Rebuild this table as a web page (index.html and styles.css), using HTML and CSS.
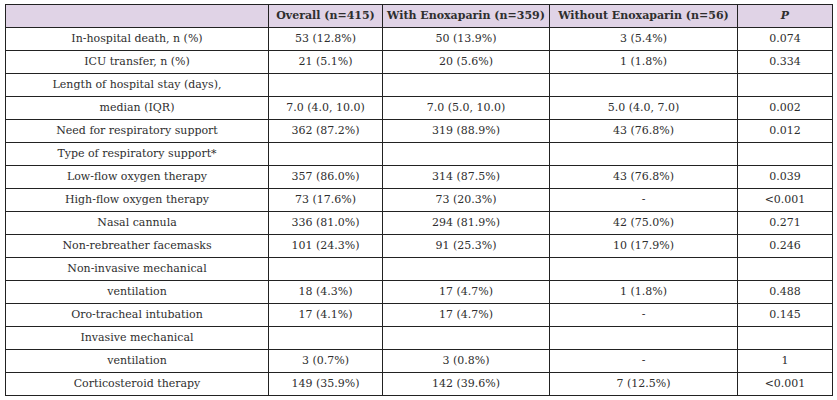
FILE: index.html
```html
<!DOCTYPE html>
<html lang="en">
<head>
<meta charset="utf-8">
<title>Outcomes</title>
<link rel="stylesheet" href="styles.css">
</head>
<body>
<table class="outcomes">
  <colgroup>
    <col class="c-label"><col class="c-overall"><col class="c-with"><col class="c-without"><col class="c-p">
  </colgroup>
  <thead>
    <tr><th></th><th>Overall (n=415)</th><th>With Enoxaparin (n=359)</th><th>Without Enoxaparin (n=56)</th><th><i>P</i></th></tr>
  </thead>
  <tbody>
    <tr><td>In-hospital death, n (%)</td><td>53 (12.8%)</td><td>50 (13.9%)</td><td>3 (5.4%)</td><td>0.074</td></tr>
    <tr><td>ICU transfer, n (%)</td><td>21 (5.1%)</td><td>20 (5.6%)</td><td>1 (1.8%)</td><td>0.334</td></tr>
    <tr><td>Length of hospital stay (days),</td><td></td><td></td><td></td><td></td></tr>
    <tr><td>median (IQR)</td><td>7.0 (4.0, 10.0)</td><td>7.0 (5.0, 10.0)</td><td>5.0 (4.0, 7.0)</td><td>0.002</td></tr>
    <tr><td>Need for respiratory support</td><td>362 (87.2%)</td><td>319 (88.9%)</td><td>43 (76.8%)</td><td>0.012</td></tr>
    <tr><td>Type of respiratory support*</td><td></td><td></td><td></td><td></td></tr>
    <tr><td>Low-flow oxygen therapy</td><td>357 (86.0%)</td><td>314 (87.5%)</td><td>43 (76.8%)</td><td>0.039</td></tr>
    <tr><td>High-flow oxygen therapy</td><td>73 (17.6%)</td><td>73 (20.3%)</td><td>-</td><td>&lt;0.001</td></tr>
    <tr><td>Nasal cannula</td><td>336 (81.0%)</td><td>294 (81.9%)</td><td>42 (75.0%)</td><td>0.271</td></tr>
    <tr><td>Non-rebreather facemasks</td><td>101 (24.3%)</td><td>91 (25.3%)</td><td>10 (17.9%)</td><td>0.246</td></tr>
    <tr><td>Non-invasive mechanical</td><td></td><td></td><td></td><td></td></tr>
    <tr><td>ventilation</td><td>18 (4.3%)</td><td>17 (4.7%)</td><td>1 (1.8%)</td><td>0.488</td></tr>
    <tr><td>Oro-tracheal intubation</td><td>17 (4.1%)</td><td>17 (4.7%)</td><td>-</td><td>0.145</td></tr>
    <tr><td>Invasive mechanical</td><td></td><td></td><td></td><td></td></tr>
    <tr><td>ventilation</td><td>3 (0.7%)</td><td>3 (0.8%)</td><td>-</td><td>1</td></tr>
    <tr><td>Corticosteroid therapy</td><td>149 (35.9%)</td><td>142 (39.6%)</td><td>7 (12.5%)</td><td>&lt;0.001</td></tr>
  </tbody>
</table>
</body>
</html>
```
FILE: styles.css
```css
html, body {
  margin: 0;
  padding: 0;
  background: #ffffff;
}
body {
  padding: 4px 0 0 5px;
  font-family: "DejaVu Serif", "Liberation Serif", serif;
  font-size: 11px;
  color: #2e2e2e;
}
.outcomes {
  border-collapse: collapse;
  table-layout: fixed;
  width: 827px;
}
.c-label { width: 263px; }
.c-overall { width: 114px; }
.c-with { width: 167px; }
.c-without { width: 188px; }
.c-p { width: 95px; }
.outcomes th,
.outcomes td {
  border: 1px solid #222222;
  height: 22px;
  padding: 0 4px;
  text-align: center;
  vertical-align: middle;
  line-height: 16px;
  white-space: nowrap;
}
.outcomes thead th {
  background: #e0d3e6;
  font-weight: bold;
  font-size: 11px;
}
```
